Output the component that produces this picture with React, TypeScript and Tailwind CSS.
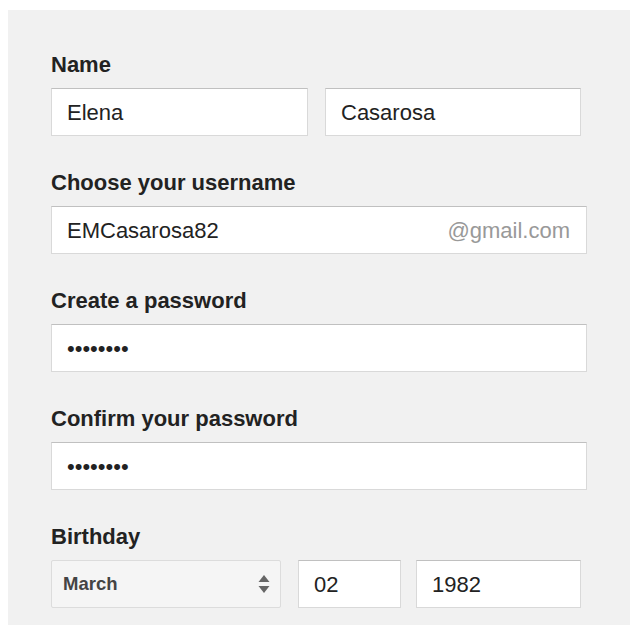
const font = { fontFamily: '"Liberation Sans", Arial, sans-serif' };

function Label({ children }: { children: string }) {
  return <div className="text-[22px] leading-6 pt-[1px] font-bold text-[#222]">{children}</div>;
}

const inputCls =
  "h-12 bg-white border border-[#d9d9d9] border-t-[#c0c0c0] px-[15px] pt-[1px] text-[22px] text-[#222] outline-none";

export default function App() {
  return (
    <div className="w-[640px] h-[625px] bg-white pt-[10px] pl-2" style={font}>
      <div className="w-[622px] h-[615px] bg-[#f1f1f1] pt-[42px] pl-[43px] pr-[43px] flex flex-col gap-[34px]">
        <div className="flex flex-col gap-[11px]">
          <Label>Name</Label>
          <div className="flex gap-[17px]">
            <input readOnly defaultValue="Elena" className={`${inputCls} w-[257px]`} style={font} />
            <input readOnly defaultValue="Casarosa" className={`${inputCls} w-[256px]`} style={font} />
          </div>
        </div>

        <div className="flex flex-col gap-[11px]">
          <Label>Choose your username</Label>
          <div className={`${inputCls} w-[536px] flex items-center justify-between pr-4`}>
            <span>EMCasarosa82</span>
            <span className="text-[#999]">@gmail.com</span>
          </div>
        </div>

        <div className="flex flex-col gap-[11px]">
          <Label>Create a password</Label>
          <input readOnly type="password" defaultValue="elena123" className={`${inputCls} w-[536px]`} style={font} />
        </div>

        <div className="flex flex-col gap-[11px]">
          <Label>Confirm your password</Label>
          <input readOnly type="password" defaultValue="elena123" className={`${inputCls} w-[536px]`} style={font} />
        </div>

        <div className="flex flex-col gap-[11px]">
          <Label>Birthday</Label>
          <div className="flex">
            <div className="h-12 w-[230px] rounded-[2px] border border-[#dcdcdc] bg-[#f5f5f5] flex items-center justify-between pl-[11px] pr-[10px]">
              <span className="text-[18.5px] font-bold text-[#444]">March</span>
              <svg width="12" height="20" viewBox="0 0 12 20" className="text-[#666]">
                <path d="M6 1 L11.5 8 H0.5 Z" fill="currentColor" />
                <path d="M0.5 12 H11.5 L6 19 Z" fill="currentColor" />
              </svg>
            </div>
            <input readOnly defaultValue="02" className={`${inputCls} w-[103px] ml-[17px]`} style={font} />
            <input readOnly defaultValue="1982" className={`${inputCls} w-[165px] ml-[15px]`} style={font} />
          </div>
        </div>
      </div>
    </div>
  );
}
